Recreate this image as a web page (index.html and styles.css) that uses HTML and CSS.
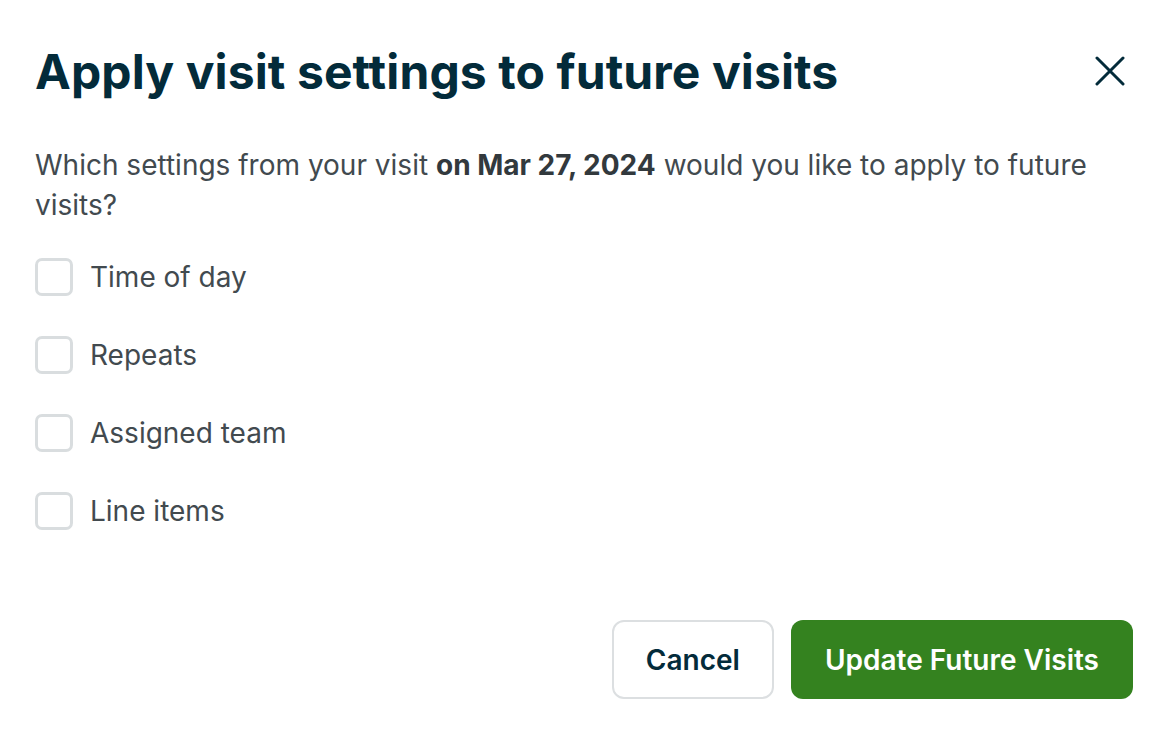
FILE: index.html
```html
<!DOCTYPE html>
<html lang="en">
<head>
  <meta charset="UTF-8">
  <meta name="viewport" content="width=device-width, initial-scale=1.0">
  <title>Apply visit settings</title>
  <link rel="stylesheet" href="styles.css">
</head>
<body>

  <div class="dialog">
    <header class="dialog-header">
      <h1>Apply visit settings to future visits</h1>
      <button class="close" aria-label="Close">
        <svg width="30" height="30" viewBox="0 0 30 30">
          <path d="M2 2 L28 28 M28 2 L2 28" stroke="currentColor" stroke-width="3" stroke-linecap="round" fill="none"/>
        </svg>
      </button>
    </header>

    <p class="intro">Which settings from your visit <b>on Mar 27, 2024</b> would you like to apply to future visits?</p>

    <div class="options">
      <label class="option"><input type="checkbox"><span class="box"></span>Time of day</label>
      <label class="option"><input type="checkbox"><span class="box"></span>Repeats</label>
      <label class="option"><input type="checkbox"><span class="box"></span>Assigned team</label>
      <label class="option"><input type="checkbox"><span class="box"></span>Line items</label>
    </div>

    <div class="actions">
      <button class="btn btn-secondary">Cancel</button>
      <button class="btn btn-primary">Update Future Visits</button>
    </div>
  </div>

</body>
</html>
```

FILE: styles.css
```css
* {
  margin: 0;
  padding: 0;
  box-sizing: border-box;
  font-family: Inter, "Noto Sans", sans-serif;
}

body {
  background: #ffffff;
}

.dialog {
  padding: 36px 43px 0 35px;
}

.dialog-header {
  display: flex;
  justify-content: space-between;
  align-items: center;
  height: 70px;
}

.dialog-header h1 {
  font-size: 48px;
  font-weight: 700;
  color: #032b3a;
  letter-spacing: 0.1px;
}

.close {
  background: none;
  border: 0;
  color: #032b3a;
  cursor: pointer;
  display: flex;
  margin-right: 8px;
}

.intro {
  margin-top: 39px;
  font-size: 28px;
  line-height: 40px;
  color: #424a4f;
  max-width: 1080px;
}

.intro b {
  color: #32393d;
}

.options {
  display: flex;
  flex-direction: column;
  gap: 40px;
  margin-top: 33px;
}

.option {
  display: flex;
  align-items: center;
  gap: 17px;
  height: 38px;
  font-size: 28px;
  color: #424a4f;
  cursor: pointer;
}

.option input {
  display: none;
}

.box {
  width: 38px;
  height: 38px;
  border: 3px solid #d9dddf;
  border-radius: 7px;
  background: #ffffff;
}

.actions {
  display: flex;
  justify-content: flex-end;
  gap: 17px;
  margin-top: 90px;
}

.btn {
  height: 79px;
  padding: 0 34px;
  border-radius: 12px;
  font-size: 28px;
  font-weight: 600;
  cursor: pointer;
}

.btn-secondary {
  background: #ffffff;
  color: #032b3a;
  border: 2px solid #dcdfe1;
  padding: 0 32px;
}

.btn-primary {
  background: #34821f;
  color: #ffffff;
  border: 0;
}
```
